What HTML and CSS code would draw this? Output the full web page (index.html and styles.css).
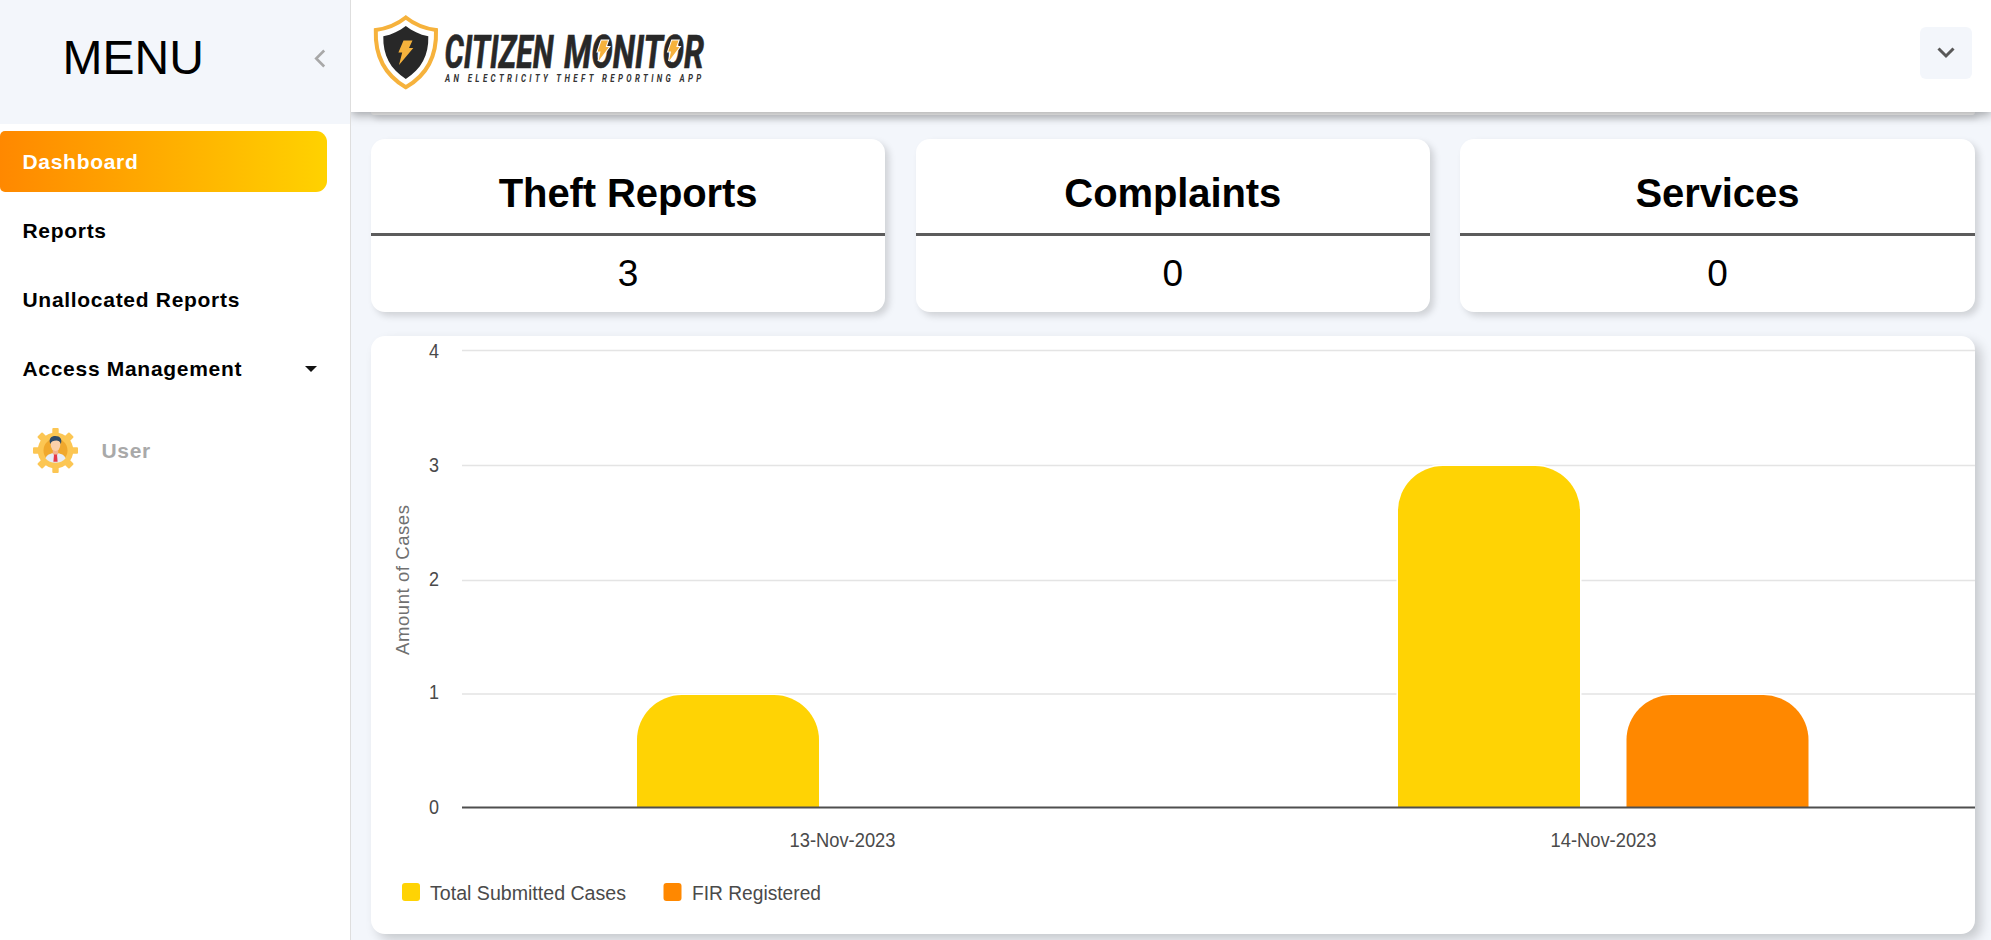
FILE: index.html
```html
<!DOCTYPE html>
<html lang="en">
<head>
<meta charset="utf-8">
<title>Citizen Monitor</title>
<link rel="stylesheet" href="styles.css">
</head>
<body>
<div class="app">
  <aside class="sidebar">
    <div class="sidebar-head">
      <span class="menu-title">MENU</span>
      <svg class="collapse" width="12" height="19" viewBox="0 0 12 19"><path d="M10.2 1.5 2.2 9.5l8 8" fill="none" stroke="#a8a8a8" stroke-width="2.6"/></svg>
    </div>
    <nav class="nav">
      <a class="nav-item active">Dashboard</a>
      <a class="nav-item">Reports</a>
      <a class="nav-item">Unallocated Reports</a>
      <a class="nav-item">Access Management<span class="caret"></span></a>
      <a class="nav-sub">
        <svg width="45" height="45" viewBox="0 0 45 45">
          <g fill="#fcc653">
            <circle cx="22.5" cy="22.5" r="17.8"/>
            <rect x="19.3" y="0" width="6.4" height="45" rx="1"/><rect x="0" y="19.3" width="45" height="6.4" rx="1"/>
            <g transform="rotate(45 22.5 22.5)"><rect x="19" y="0" width="7" height="45" rx="1"/><rect x="0" y="19" width="45" height="7" rx="1"/></g>
          </g>
          <circle cx="22.5" cy="22.5" r="12" fill="#f0a82d"/>
          <path d="M12.5 30.5c1-3.500 4-4.600 7-5.300h6c3 .7 6 1.800 7 5.300-4.500 5.600-15.500 5.600-20 0z" fill="#e6edf8"/>
          <path d="M19.8 21h5.400v5l-2.700 2-2.700-2z" fill="#f2b48e"/>
          <ellipse cx="22.5" cy="16.8" rx="4.800" ry="6.200" fill="#fbd0ab"/>
          <path d="M17.3 16c-2-5.500 1-8 5-8 5 0 7.200 3 5.500 8-.7-3-2.300-3.600-4.500-3.600-3 0-5 .6-6 3.600z" fill="#2f4b69"/>
          <path d="M21 26.500h3l.6 7.300h-4.200z" fill="#e5394a"/>
        </svg>
        <span>User</span>
      </a>
    </nav>
  </aside>
  <div class="content">
    <header class="topbar">
      <svg class="logo" width="350" height="80" viewBox="370 12 350 80">
        <path d="M405.800 17.500c7.500 6 17 10.800 30.200 12.500 1 27-10.500 46-30.200 57.300C386.500 76 374.800 57 375.800 30c13-1.700 22.500-6.500 30-12.500z" fill="#fff" stroke="#f6b23c" stroke-width="4"/>
        <path d="M405.800 26c6.500 5 13.500 8.500 22.500 10.300.6 19-7 33-22.500 42.700-15.500-9.700-23-23.700-22.500-42.700 9-1.800 16-5.300 22.500-10.300z" fill="#282828"/>
        <path d="M403.500 40.500h9l-3.500 7.500h4.300L399 65l3.200-12.500h-3.800z" fill="#f6b23c"/>
        <text class="logo-name" x="444.5" y="67.7" textLength="109" lengthAdjust="spacingAndGlyphs">CITIZEN</text>
        <text class="logo-name" x="564" y="67.7" textLength="140" lengthAdjust="spacingAndGlyphs">MONITOR</text>
        <g stroke="#fff" stroke-width="2" paint-order="stroke" fill="#f6b23c">
          <path d="M601.500 40.500h6.500l-2.300 6.500h3.300L598.500 61l2-9.500h-2.800z"/>
          <path d="M672 40.500h6.500l-2.300 6.500h3.300L669 61l2-9.500h-2.800z"/>
        </g>
        <text class="logo-tag" transform="translate(445 82.300) scale(.72 1)" textLength="356">AN ELECTRICITY THEFT REPORTING APP</text>
      </svg>
      <button class="profile"><svg width="18" height="12" viewBox="0 0 18 12"><path d="m1.500 1.500 7.500 7.500 7.500-7.500" fill="none" stroke="#585858" stroke-width="3"/></svg></button>
    </header>
    <main class="main">
      <div class="card-tail"></div>
      <section class="stats">
        <div class="card stat"><h2>Theft Reports</h2><p>3</p></div>
        <div class="card stat"><h2>Complaints</h2><p>0</p></div>
        <div class="card stat"><h2>Services</h2><p>0</p></div>
      </section>
      <section class="card chart">
        <svg width="1604" height="598" viewBox="371 336 1604 598">
          <path d="M462 350.500H1975M462 465.500H1975M462 580.500H1975M462 694H1975" stroke="#e4e4e4" stroke-width="1.600"/>
          <g stroke="#fff" stroke-width="3" paint-order="stroke">
            <path d="M637 808v-68a45 45 0 0 1 45-45h92a45 45 0 0 1 45 45v68z" fill="#ffd304"/>
            <path d="M1398 808V511a45 45 0 0 1 45-45h92a45 45 0 0 1 45 45v297z" fill="#ffd304"/>
            <path d="M1626.500 808v-68a45 45 0 0 1 45-45h92a45 45 0 0 1 45 45v68z" fill="#ff8800"/>
          </g>
          <path d="M462 807.500H1975" stroke="#4e4e4e" stroke-width="2"/>
          <g class="axis">
            <text x="429" y="358" textLength="10" lengthAdjust="spacingAndGlyphs">4</text><text x="429" y="472" textLength="10" lengthAdjust="spacingAndGlyphs">3</text><text x="429" y="585.500" textLength="10" lengthAdjust="spacingAndGlyphs">2</text><text x="429" y="699" textLength="10" lengthAdjust="spacingAndGlyphs">1</text><text x="429" y="814" textLength="10" lengthAdjust="spacingAndGlyphs">0</text>
          </g>
          <g class="labels">
            <text x="789.500" y="847.300" textLength="106" lengthAdjust="spacingAndGlyphs">13-Nov-2023</text>
            <text x="1550.500" y="847.300" textLength="106" lengthAdjust="spacingAndGlyphs">14-Nov-2023</text>
            <text x="430" y="899.500" textLength="196" lengthAdjust="spacingAndGlyphs">Total Submitted Cases</text>
            <text x="692" y="899.500" textLength="129" lengthAdjust="spacingAndGlyphs">FIR Registered</text>
          </g>
          <text class="axis-title" transform="translate(409 655) rotate(-90)" textLength="150">Amount of Cases</text>
          <rect x="402" y="883" width="18" height="18" rx="3" fill="#ffd304"/>
          <rect x="663.500" y="883" width="18" height="18" rx="3" fill="#ff8800"/>
        </svg>
      </section>
    </main>
  </div>
</div>
</body>
</html>
```

FILE: styles.css
```css
* { box-sizing: border-box; }
body { margin: 0; font-family: "Liberation Sans", Arial, sans-serif; background: #f3f6fb; color: #000; overflow: hidden; }
.app { display: flex; height: 940px; }
.sidebar { position: relative; z-index: 2; flex: none; width: 351px; background: #fff; border-right: 1px solid #dedede; }
.sidebar-head { display: flex; align-items: center; justify-content: space-between; height: 124px; padding: 0 24px 8px 62.500px; background: #f3f6fb; }
.menu-title { font-size: 48px; line-height: 56px; }
.nav { display: flex; flex-direction: column; gap: 8px; padding-top: 7.400px; }
.nav-item { display: flex; align-items: center; justify-content: space-between; width: 327px; height: 61px; padding: 1px 10px 0 22.500px; font-size: 21px; font-weight: 700; letter-spacing: .7px; }
.active { color: #fff; background: linear-gradient(90deg, #ff8800, #ffd200); border-radius: 5px 11px 11px 5px; }
.caret { border: 6px solid transparent; border-top-color: #111; border-bottom: 0; }
.nav-sub { display: flex; align-items: center; gap: 24px; margin-top: 21px; padding-left: 32.500px; font-size: 21px; font-weight: 700; letter-spacing: .7px; color: #a9a9a9; }
.content { flex: 1; min-width: 0; }
.topbar { position: relative; z-index: 1; display: flex; justify-content: space-between; align-items: flex-start; height: 112px; padding: 12px 19.500px 0 19px; background: #fff; box-shadow: 0 3px 10px rgba(0, 0, 0, .35); }
.logo { overflow: visible; }
.logo-name { font: italic 700 46px Roboto, sans-serif; fill: #282828; stroke: #282828; stroke-width: .7px; }
.logo-tag { font: italic 700 11px Roboto, sans-serif; fill: #333; }
.profile { display: flex; align-items: center; justify-content: center; width: 52px; height: 52px; margin-top: 15px; padding: 0; border: 0; border-radius: 6px; background: #f3f6fb; }
.main { padding: 0 16.500px 0 20px; }
.card-tail { height: 3px; border-radius: 0 0 12px 12px; background: #fff; box-shadow: 3px 3px 6px rgba(0, 0, 0, .22); }
.card { background: #fff; border-radius: 14px; }
.stats { display: grid; grid-template-columns: repeat(3, 1fr); gap: 30.500px; margin-top: 24px; }
.stat { height: 173px; text-align: center; box-shadow: 4px 4px 7px rgba(0, 0, 0, .15); }
.stat h2 { height: 97px; margin: 0; padding-top: 31px; font-size: 40px; line-height: 46px; letter-spacing: -.1px; border-bottom: 3px solid #5c5c5c; }
.stat p { margin: 0; padding-top: 16px; font-size: 37px; line-height: 44px; }
.chart { height: 598px; margin-top: 24px; overflow: hidden; box-shadow: 6px 6px 12px rgba(0, 0, 0, .18); }
.chart svg { display: block; }
.axis, .labels { fill: #4a4a4a; }
.axis { font-size: 20px; }
.labels { font-size: 20.500px; }
.axis-title { font-size: 18.500px; fill: #707070; }
```
